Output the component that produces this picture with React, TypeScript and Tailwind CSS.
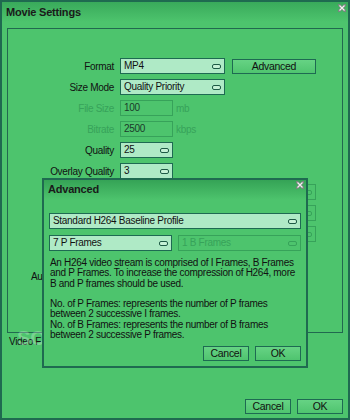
import React from 'react';

const CloseIcon = () => (
  <svg width="8" height="8" viewBox="0 0 8 8" className="block">
    <path d="M1 1L7 7M7 1L1 7" stroke="#7d8580" strokeWidth="2.6" strokeLinecap="square" />
    <path d="M1.5 1.5L6.5 6.5M6.5 1.5L1.5 6.5" stroke="#f4f4f4" strokeWidth="1.1" />
  </svg>
);

const DropIcon = ({ disabled }: { disabled?: boolean }) => (
  <span
    className={`block w-[9px] h-[5px] rounded-[2px] border ${
      disabled ? 'border-[#37a25a]' : 'border-[#1d5a45] bg-[#c6f2d6]'
    }`}
  />
);

const Combo = ({ value, className, disabled }: { value?: string; className: string; disabled?: boolean }) => (
  <div
    className={`flex items-center justify-between h-4 border pl-[3px] pr-[3px] leading-none ${className} ${
      disabled ? 'border-[#37a25a] text-[#37a25a]' : 'border-[#1e6a52] bg-[#afeac6] text-[#111]'
    }`}
  >
    <span className="whitespace-nowrap">{value}</span>
    <DropIcon disabled={disabled} />
  </div>
);

const Field = ({ value }: { value: string }) => (
  <div className="flex items-center h-4 w-[53px] border border-[#37a25a] pl-[3px] text-[#1b3a2a] leading-none">{value}</div>
);

const Button = ({ label, className }: { label: string; className: string }) => (
  <button
    className={`h-[15px] border border-[#1e6a52] bg-linear-to-b from-[#66d384] to-[#4fc46f] text-[#111] leading-none flex items-center justify-center ${className}`}
  >
    {label}
  </button>
);

const Row = ({ label, muted, children }: { label?: string; muted?: boolean; children?: React.ReactNode }) => (
  <div className="flex items-center h-4">
    <div className={`w-[106px] mr-[6px] text-right whitespace-nowrap ${muted ? 'text-[#37a25a]' : 'text-[#111]'}`}>{label}</div>
    {children}
  </div>
);

export default function App() {
  return (
    <div className="relative w-[350px] h-[420px] overflow-hidden bg-[#4dc46d] border-2 border-[#1f6a50] flex flex-col font-['Liberation_Sans',Arial,sans-serif] text-[10px] tracking-[-0.3px] text-[#111]">
      {/* Title bar */}
      <div className="flex justify-between h-5 bg-linear-to-b from-[#39aa5b] to-[#4dc46d] shrink-0">
        <span className="pl-[4px] pt-[3px] font-bold text-[11px] tracking-[-0.2px] text-[#1a1a1a] leading-[14px]">Movie Settings</span>
        <div className="pr-[2px] pt-[2px]">
          <CloseIcon />
        </div>
      </div>

      {/* Group box */}
      <div className="ml-[5px] mt-[6px] w-[336px] h-[305px] border border-[#21694f] pt-[29px] flex flex-col gap-[5px] shrink-0">
        <Row label="Format">
          <Combo value="MP4" className="w-[105px]" />
          <Button label="Advanced" className="ml-[7px] w-[84px] text-[10.5px]" />
        </Row>
        <Row label="Size Mode">
          <Combo value="Quality Priority" className="w-[105px]" />
        </Row>
        <Row label="File Size" muted>
          <Field value="100" />
          <span className="ml-[3px] text-[#37a25a]">mb</span>
        </Row>
        <Row label="Bitrate" muted>
          <Field value="2500" />
          <span className="ml-[3px] text-[#37a25a]">kbps</span>
        </Row>
        <Row label="Quality">
          <Combo value="25" className="w-[53px]" />
        </Row>
        <Row label="Overlay Quality">
          <Combo value="3" className="w-[53px]" />
        </Row>
        <Row>
          <Combo className="w-[196px]" disabled />
        </Row>
        <Row>
          <Combo className="w-[196px]" disabled />
        </Row>
        <Row>
          <Combo className="w-[196px]" disabled />
        </Row>
        <Row />
        {/* only the start of this label shows beside the dialog */}
        <div className="flex items-center h-4 ml-[23px] whitespace-nowrap">Au</div>
      </div>

      <div className="h-4 ml-[7px] flex items-center whitespace-nowrap">Video F</div>

      {/* Bottom buttons */}
      <div className="mt-auto flex justify-end gap-[6px] pr-[5px] pb-[4px]">
        <Button label="Cancel" className="w-[46px] text-[10.5px]" />
        <Button label="OK" className="w-[46px] text-[10.5px]" />
      </div>

      {/* Watermark */}
      <div className="absolute left-[15px] top-[326px] text-[20px] font-bold tracking-[0px] text-white/25 leading-none select-none">SOFTPEDIA</div>

      {/* Advanced dialog */}
      <div className="absolute left-[40px] top-[176px] w-[266px] h-[190px] border-2 border-[#1f6a50] bg-[#4dc46d] flex flex-col">
        <div className="flex justify-between h-5 bg-linear-to-b from-[#35a356] to-[#4dc46d] shrink-0">
          <span className="pl-[4px] pt-[2px] font-bold text-[11px] tracking-[-0.2px] text-[#1a1a1a] leading-[14px]">Advanced</span>
          <div className="pr-[2px] pt-[1px]">
            <CloseIcon />
          </div>
        </div>
        <div className="flex-1 flex flex-col px-[5px] pt-[13px] pb-[5px]">
          <Combo value="Standard H264 Baseline Profile" className="w-full" />
          <div className="flex gap-[6px] mt-[6px]">
            <Combo value="7 P Frames" className="w-[123px]" />
            <Combo value="1 B Frames" className="w-[123px]" disabled />
          </div>
          <p className="mt-[7px] pl-[1px] leading-[10.3px] whitespace-nowrap text-[#111]">
            An H264 video stream is comprised of I Frames, B Frames
            <br />
            and P Frames. To increase the compression of H264, more
            <br />
            B and P frames should be used.
            <br />
            <br />
            No. of P Frames: represents the number of P frames
            <br />
            between 2 successive I frames.
            <br />
            No. of B Frames: represents the number of B frames
            <br />
            between 2 successive P frames.
          </p>
          <div className="mt-auto flex justify-end gap-[6px]">
            <Button label="Cancel" className="w-[46px] text-[10.5px]" />
            <Button label="OK" className="w-[46px] text-[10.5px]" />
          </div>
        </div>
      </div>
    </div>
  );
}
